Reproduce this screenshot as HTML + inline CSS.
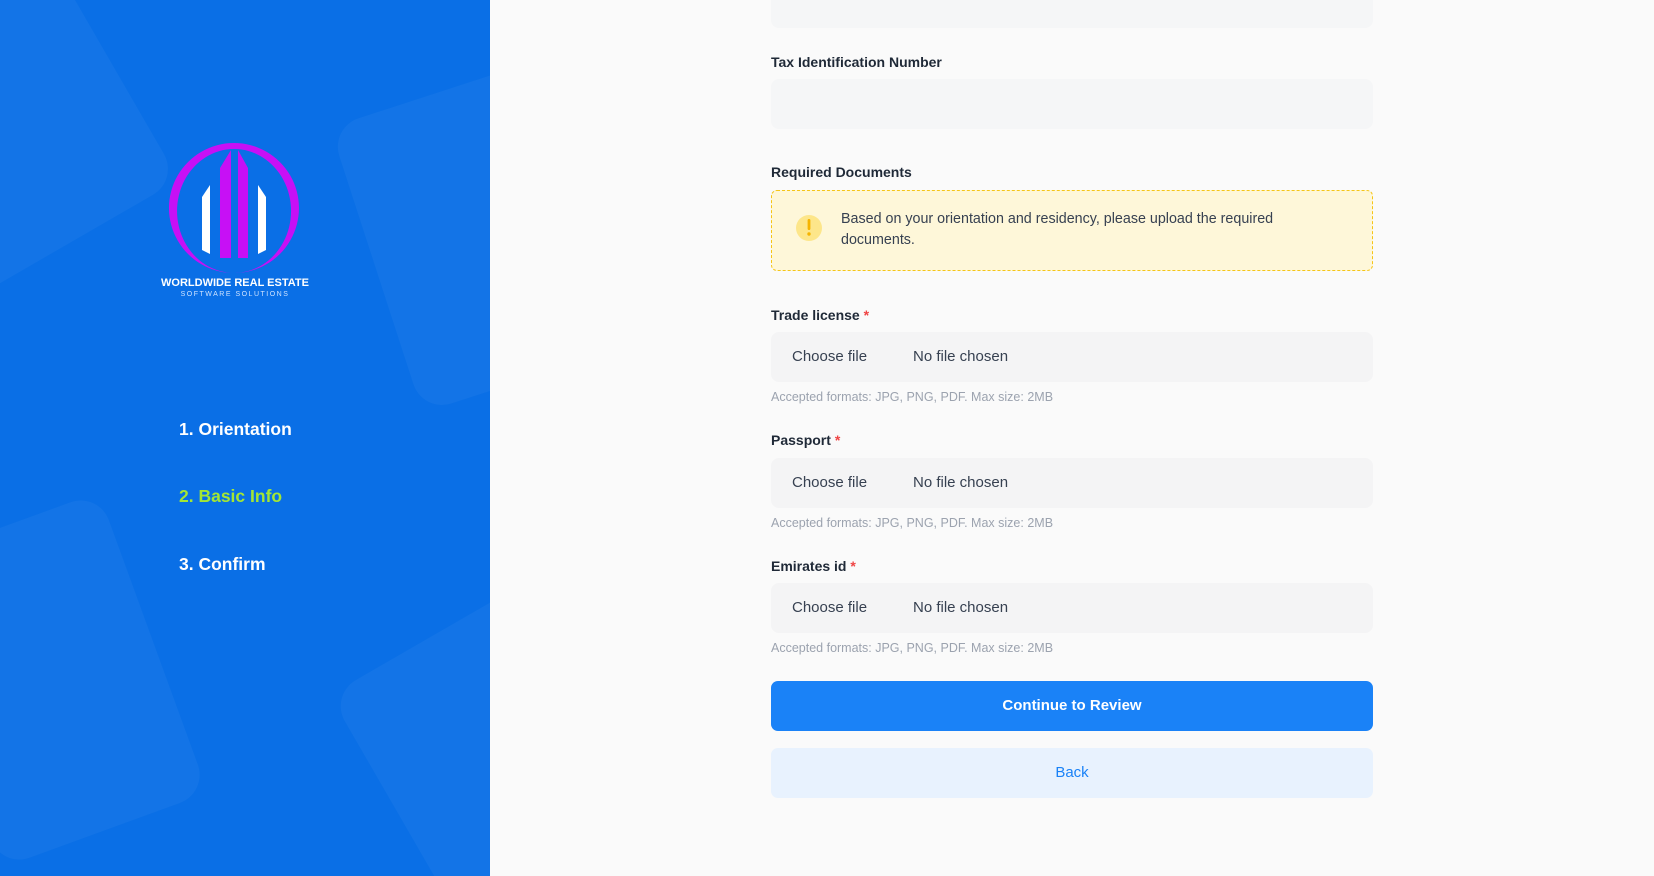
<!DOCTYPE html>
<html><head><meta charset="utf-8"><style>
*{box-sizing:border-box;margin:0;padding:0}
html,body{width:1654px;height:876px;overflow:hidden}
body{background:#fafafa;font-family:"Liberation Sans",sans-serif;position:relative}
.side{position:absolute;left:0;top:0;width:490px;height:876px;background:#0a6fe6;overflow:hidden}
.sh{position:absolute;background:rgba(255,255,255,0.04);border-radius:30px}
.nav{position:absolute;left:179px;font-size:17.5px;font-weight:bold;color:#fff}
.lbl{position:absolute;left:771px;font-size:14px;font-weight:bold;color:#1f2937}
.lbl span{color:#ef4444}
.inp{position:absolute;left:771px;width:602px;height:50px;background:#f3f4f6;border-radius:8px;opacity:.75}
.file{position:absolute;left:771px;width:602px;height:50px;background:#f4f4f5;border-radius:8px;font-size:15px;color:#374151;line-height:50px}
.file b{font-weight:normal;position:absolute;left:21px}
.file i{font-style:normal;position:absolute;left:142px}
.hint{position:absolute;left:771px;font-size:12.5px;color:#9ca3af}
</style></head><body>
<div class="side">
 <div class="sh" style="left:-120px;top:-40px;width:240px;height:300px;transform:rotate(-30deg)"></div>
 <div class="sh" style="left:370px;top:80px;width:260px;height:300px;transform:rotate(-18deg)"></div>
 <div class="sh" style="left:-60px;top:520px;width:220px;height:320px;transform:rotate(-20deg)"></div>
 <div class="sh" style="left:390px;top:620px;width:220px;height:300px;transform:rotate(-30deg)"></div>
 <svg style="position:absolute;left:164px;top:138px" width="140" height="140" viewBox="0 0 140 140">
  <path d="M70 5 A65 65 0 1 1 69.9 5 M70 11 A57 62 0 1 0 70.1 11" fill="#c710f5" fill-rule="evenodd"/>
  <polygon points="38,59 46,47 46,116 38,112" fill="#fff"/>
  <polygon points="94,47 102,59 102,112 94,116" fill="#fff"/>
  <polygon points="56,30 67,12 67,120 56,120" fill="#c710f5"/>
  <polygon points="74,12 84,30 84,120 74,120" fill="#c710f5"/>
 </svg>
 <div style="position:absolute;left:0;width:470px;text-align:center;top:277px;color:#fff;font-weight:bold;font-size:11px">WORLDWIDE REAL ESTATE</div>
 <div style="position:absolute;left:0;width:470px;text-align:center;top:291px;color:#cfe3ff;font-size:7px;letter-spacing:1.5px">SOFTWARE SOLUTIONS</div>
 <div class="nav" style="top:419px">1. Orientation</div>
 <div class="nav" style="top:486px;color:#a3e635">2. Basic Info</div>
 <div class="nav" style="top:554px">3. Confirm</div>
</div>
<div class="inp" style="top:-20px;height:48px"></div>
<div class="lbl" style="top:54px">Tax Identification Number</div>
<div class="inp" style="top:79px"></div>
<div class="lbl" style="top:164px">Required Documents</div>
<div style="position:absolute;left:771px;top:190px;width:602px;height:81px;background:#fef7d9;border:1px dashed #f5c518;border-radius:6px">
 <svg style="position:absolute;left:22px;top:20px" width="30" height="34" viewBox="0 0 30 34"><circle cx="15" cy="17" r="13" fill="#fde68a"/><rect x="13.6" y="8" width="2.8" height="11" rx="1.4" fill="#f5b400"/><circle cx="15" cy="23" r="1.7" fill="#f5b400"/></svg>
 <div style="position:absolute;left:69px;top:18px;width:470px;font-size:14.3px;line-height:21px;color:#374151">Based on your orientation and residency, please upload the required documents.</div>
</div>
<div class="lbl" style="top:307px">Trade license <span>*</span></div>
<div class="file" style="top:332px"><b>Choose file</b><i>No file chosen</i></div>
<div class="hint" style="top:390px">Accepted formats: JPG, PNG, PDF. Max size: 2MB</div>
<div class="lbl" style="top:432px">Passport <span>*</span></div>
<div class="file" style="top:458px"><b>Choose file</b><i>No file chosen</i></div>
<div class="hint" style="top:516px">Accepted formats: JPG, PNG, PDF. Max size: 2MB</div>
<div class="lbl" style="top:558px">Emirates id <span>*</span></div>
<div class="file" style="top:583px"><b>Choose file</b><i>No file chosen</i></div>
<div class="hint" style="top:641px">Accepted formats: JPG, PNG, PDF. Max size: 2MB</div>
<div style="position:absolute;left:771px;top:681px;width:602px;height:50px;background:#1a82f7;border-radius:7px;color:#fff;font-weight:bold;font-size:15px;text-align:center;line-height:50px">Continue to Review</div>
<div style="position:absolute;left:771px;top:748px;width:602px;height:50px;background:#e8f2fe;border-radius:7px;color:#1a82f7;font-size:15px;text-align:center;line-height:50px">Back</div>
</body></html>
